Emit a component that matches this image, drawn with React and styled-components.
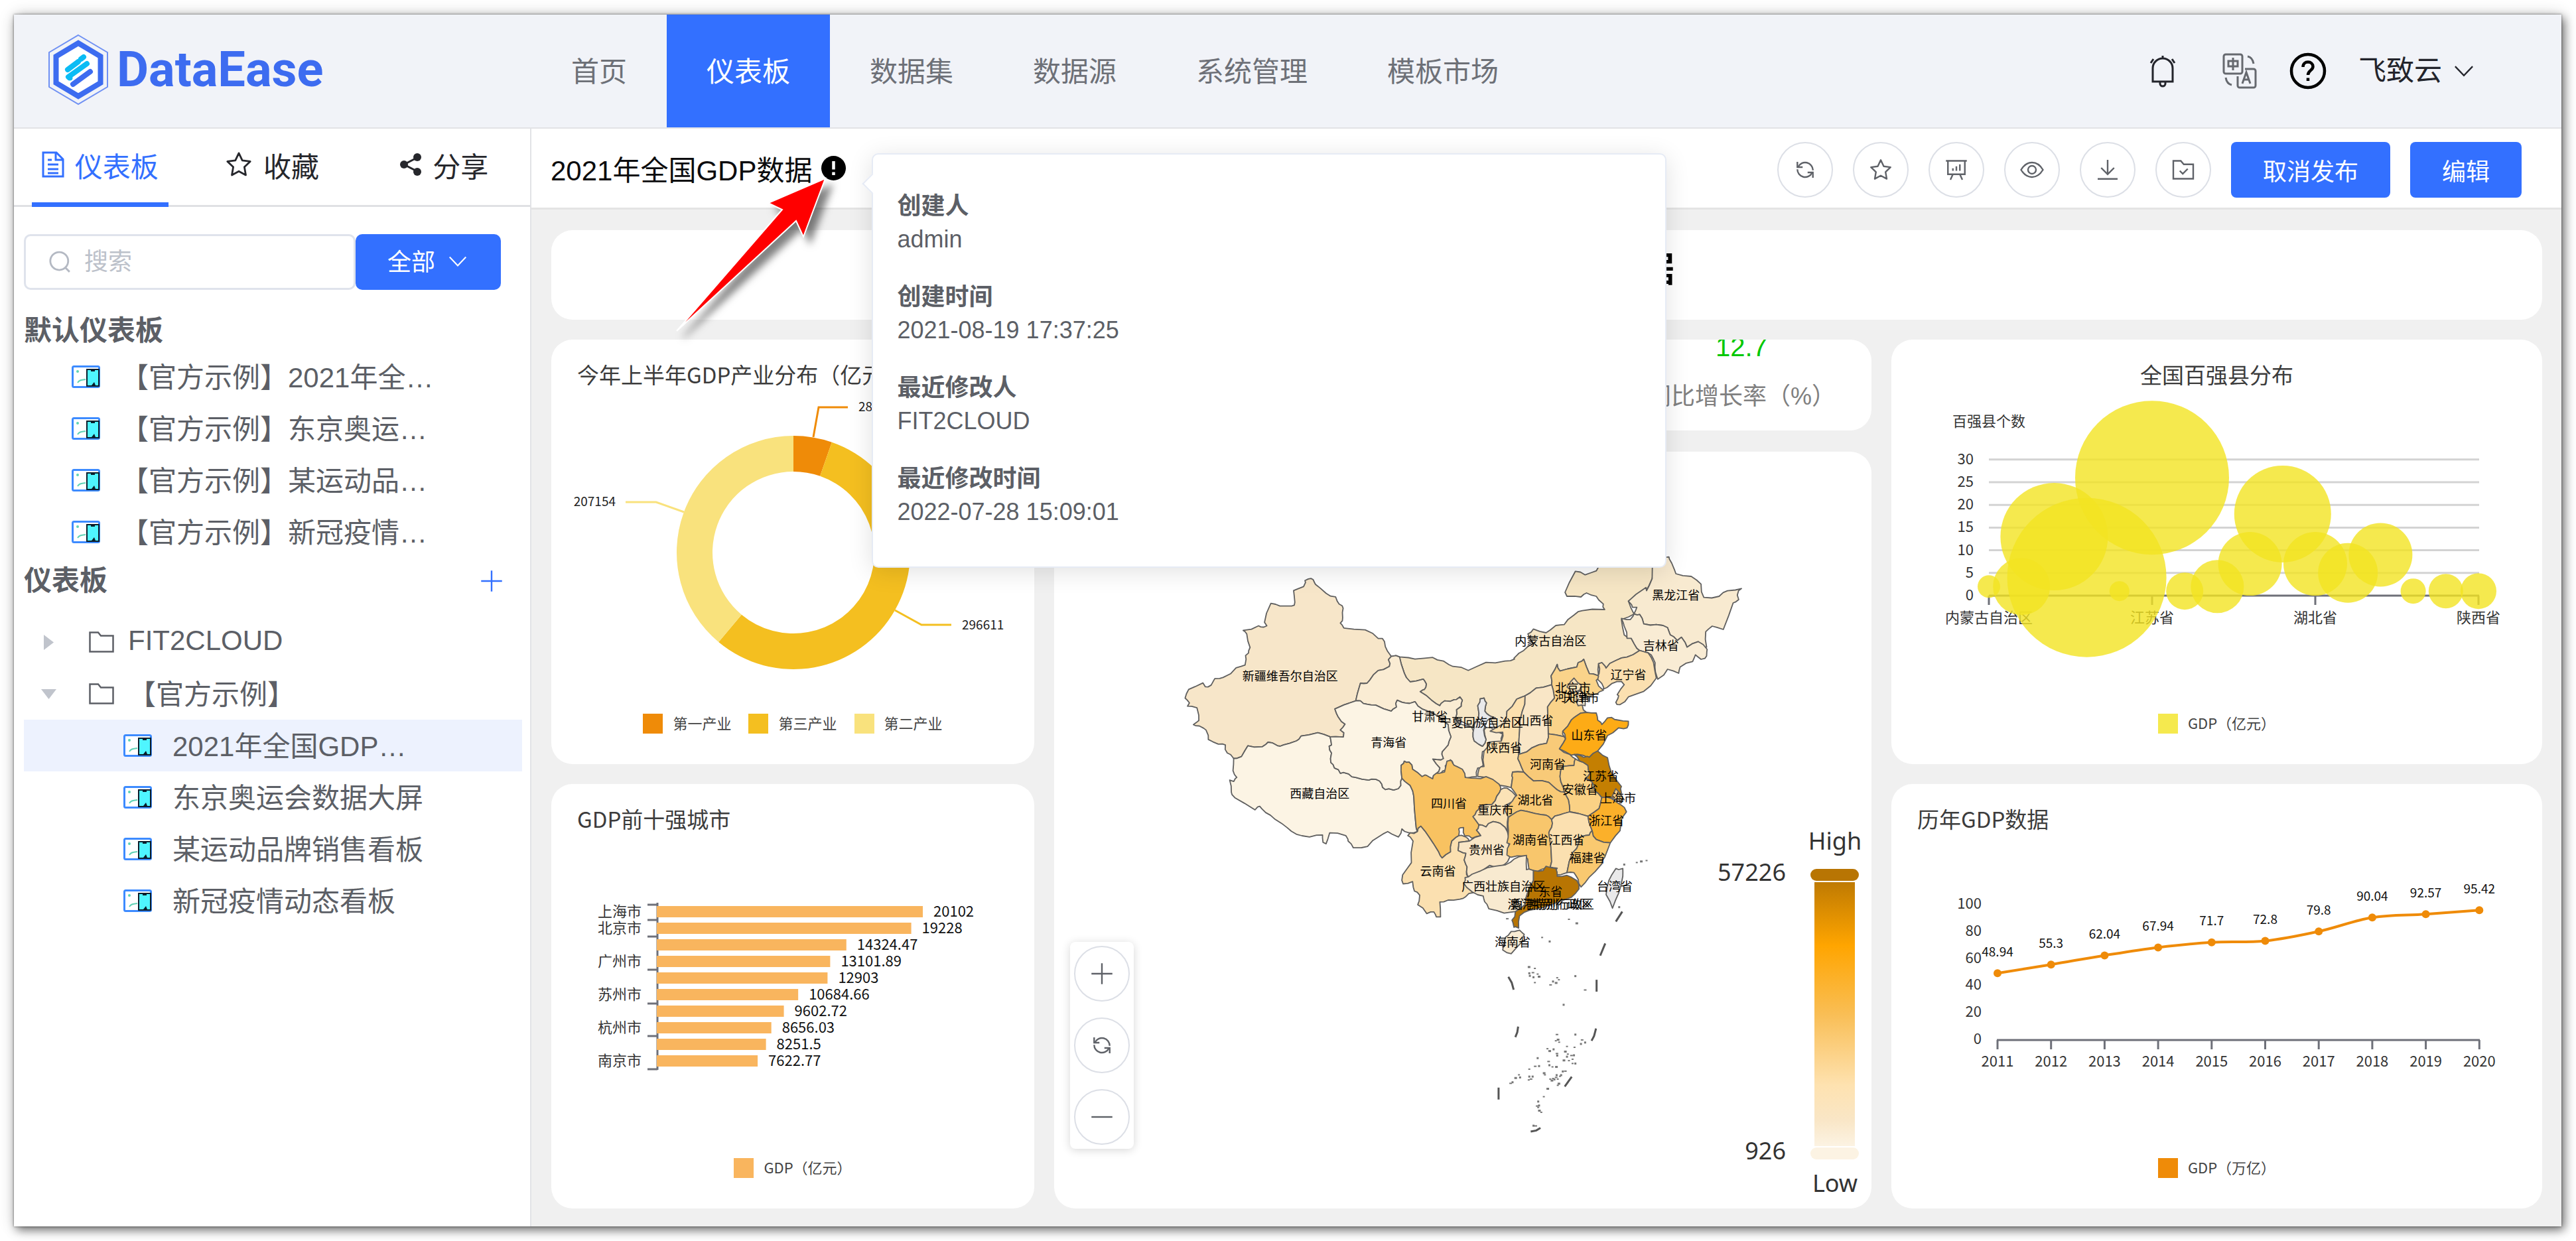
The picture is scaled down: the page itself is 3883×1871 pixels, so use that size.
import React from "react";
import styled, { createGlobalStyle, css } from "styled-components";

const UI_FONT = '"Liberation Sans", "Noto Sans CJK SC", sans-serif';
const CHART_FONT = '"Noto Sans CJK SC", "Noto Sans", sans-serif';
const BLUE = "#3370ff";

const GlobalStyle = createGlobalStyle`
  *, *::before, *::after { box-sizing: border-box; }
  body { margin: 0; background: #fff; font-family: ${UI_FONT}; }
  button, input, select { font-family: inherit; }
  h1, h2, h3, p, ul, dl, dd { margin: 0; padding: 0; }
`;

/* ---------- shell ---------- */

const Page = styled.div`
  display: flex;
  min-height: 100vh;
  padding: 22px 22px 22px 21px;
`;

const Shell = styled.div`
  flex: 1;
  display: flex;
  flex-direction: column;
  min-width: 0;
  background: #fff;
  box-shadow: 0 0 3px rgba(0, 0, 0, 0.5), 4px 5px 14px rgba(0, 0, 0, 0.55), 0 0 24px rgba(0, 0, 0, 0.14);
`;

const Header = styled.header`
  display: flex;
  align-items: stretch;
  height: 172px;
  border-bottom: 2px solid #e2e3e6;
  background: #f1f3f8;
`;

const Brand = styled.a`
  display: flex;
  align-items: center;
  gap: 11px;
  width: 780px;
  padding: 0 0 4px 50px;
  color: #3d6cf0;
  text-decoration: none;
`;

const BrandName = styled.span`
  font: bold 74px/84px Roboto, "Noto Sans", sans-serif;
`;

const Nav = styled.nav`
  display: flex;
  flex: 1;
`;

const NavLink = styled.a`
  display: flex;
  align-items: center;
  padding: 0 60px 6px;
  font-size: 42px;
  text-decoration: none;
  color: ${(p) => (p.$active ? "#fff" : "#6d7077")};
  background: ${(p) => (p.$active ? BLUE : "transparent")};
`;

const HeaderTools = styled.div`
  display: flex;
  align-items: center;
  gap: 48px;
  padding-right: 132px;
`;

const ToolButton = styled.button`
  display: flex;
  align-items: center;
  justify-content: center;
  gap: 18px;
  min-width: ${(p) => p.$width || 0}px;
  padding: 0;
  border: 0;
  background: none;
  color: ${(p) => p.$tone || "#23242b"};
  font-size: 42px;
  line-height: 60px;
`;

const Body = styled.div`
  display: flex;
  flex: 1;
`;

/* ---------- sidebar ---------- */

const Sidebar = styled.aside`
  flex: 0 0 780px;
  min-width: 0;
  border-right: 2px solid #e2e3e6;
`;

const Tabs = styled.div`
  display: grid;
  grid-template-columns: repeat(3, 1fr);
  justify-items: center;
  height: 118px;
  border-bottom: 3px solid #e0e1e4;
`;

const Tab = styled.button`
  display: flex;
  align-items: center;
  gap: 16px;
  height: 118px;
  padding: 0 15px 3px;
  border: 0;
  border-bottom: 7px solid ${(p) => (p.$active ? BLUE : "transparent")};
  background: none;
  color: ${(p) => (p.$active ? BLUE : "#26272c")};
  font-size: 42px;
`;

const SidebarBody = styled.div`
  padding: 41px 12px 0 15px;
`;

const SearchRow = styled.form`
  display: flex;
  padding-right: 32px;
`;

const SearchBox = styled.label`
  display: flex;
  flex: 1;
  align-items: center;
  gap: 20px;
  min-width: 0;
  height: 84px;
  padding: 0 34px;
  border: 3px solid #dfe3ec;
  border-radius: 10px;
  color: #b4b9c3;
`;

const SearchInput = styled.input`
  flex: 1;
  min-width: 0;
  padding: 0;
  border: 0;
  outline: 0;
  background: none;
  font-size: 36px;
  &::placeholder { color: #bcc1ca; opacity: 1; }
`;

const FilterBox = styled.label`
  position: relative;
  color: #fff;
  svg { position: absolute; right: 51px; top: 27px; pointer-events: none; }
`;

const FilterSelect = styled.select`
  appearance: none;
  width: 219px;
  height: 84px;
  padding: 0 0 0 48px;
  border: 0;
  border-radius: 10px;
  background: ${BLUE};
  color: #fff;
  font-size: 36px;
`;

const GroupHead = styled.div`
  display: flex;
  align-items: center;
  justify-content: space-between;
  margin-top: ${(p) => p.$top}px;
  padding-right: 28px;
`;

const GroupTitle = styled.h2`
  font-size: 42px;
  line-height: 60px;
  font-weight: bold;
  color: #5c5f66;
`;

const AddButton = styled.button`
  display: flex;
  padding: 0;
  border: 0;
  background: none;
  color: ${BLUE};
`;

const Tree = styled.ul`
  list-style: none;
  margin-top: ${(p) => p.$top || 0}px;
`;

const TreeRow = styled.li`
  display: flex;
  align-items: center;
  gap: ${(p) => (p.$folder ? 21 : 31)}px;
  height: 78px;
  padding-left: ${(p) => p.$indent}px;
  background: ${(p) => (p.$selected ? "#edf2fe" : "transparent")};
  color: #5c5f66;
  font-size: 42px;
  white-space: nowrap;
`;

const RowText = styled.span`
  padding-bottom: 5px;
`;

const Caret = styled.span`
  display: flex;
  justify-content: center;
  width: 24px;
  margin-right: 28px;
  color: #c0c4cc;
`;

/* ---------- workspace ---------- */

const Workspace = styled.main`
  display: flex;
  flex: 1;
  flex-direction: column;
  min-width: 0;
`;

const Toolbar = styled.div`
  display: flex;
  justify-content: space-between;
  padding: 20px 60px 15px 29px;
  border-bottom: 3px solid #e4e4e4;
`;

const BoardName = styled.div`
  position: relative;
  display: flex;
  align-items: center;
  gap: 14px;
  height: 78px;
  color: #0c0c0e;
  font-size: 42px;
  white-space: nowrap;
`;

const InfoButton = styled.button`
  display: flex;
  padding: 0;
  border: 0;
  background: none;
`;

const Actions = styled.div`
  display: flex;
  gap: 30px;
`;

const roundButton = css`
  display: flex;
  align-items: center;
  justify-content: center;
  width: 84px;
  height: 84px;
  padding: 0;
  border: 2px solid #dcdfe6;
  border-radius: 50%;
  background: #fff;
  color: #5f6268;
`;

const RoundButton = styled.button`
  ${roundButton}
`;

const PrimaryButton = styled.button`
  height: 84px;
  padding: 0 48px;
  border: 0;
  border-radius: 8px;
  background: ${BLUE};
  color: #fff;
  font-size: 36px;
`;

const Popover = styled.dl`
  position: absolute;
  z-index: 3;
  left: calc(100% + 39px);
  top: 17px;
  display: grid;
  gap: 37px;
  width: 1198px;
  padding: 53px 36px 57px;
  border: 2px solid #e6ebf5;
  border-radius: 10px;
  background: #fff;
  box-shadow: 0 6px 36px rgba(0, 0, 0, 0.12);
  color: #5c5f66;
  font-size: 36px;
  line-height: 50px;
  dt { font-weight: bold; }
  &::before {
    content: "";
    position: absolute;
    left: -12px;
    top: 33px;
    width: 22px;
    height: 22px;
    border: solid #e6ebf5;
    border-width: 0 0 2px 2px;
    background: #fff;
    transform: rotate(45deg);
  }
`;

const Pointer = styled.svg`
  position: absolute;
  z-index: 4;
  left: 190px;
  top: 41px;
  overflow: visible;
  filter: drop-shadow(10px 10px 6px rgba(0, 0, 0, 0.5));
`;

const Board = styled.div`
  display: grid;
  flex: 1;
  grid-template-columns: 728fr 1232fr 981fr;
  align-content: start;
  gap: 30px;
  padding: 31px 29px 26px 30px;
  background: #f0f0f0;
`;

const Card = styled.section`
  position: relative;
  overflow: hidden;
  min-width: 0;
  border-radius: 32px;
  background: #fff;
`;

const BannerCard = styled(Card)`
  grid-column: 1 / -1;
  padding: 22px 0 37px;
  text-align: center;
`;

const BannerTitle = styled.h1`
  font-size: 52px;
  line-height: 76px;
  font-weight: bold;
  color: #000;
`;

const Column = styled.div`
  display: flex;
  flex-direction: column;
  gap: ${(p) => p.$gap || 30}px;
  min-width: 0;
`;

const ChartCard = styled(Card)`
  padding: 32px 0 45px;
`;

const ChartTitle = styled.h3`
  padding: 0 39px;
  font: normal 33px/40px ${CHART_FONT};
  text-align: ${(p) => (p.$center ? "center" : "left")};
  white-space: nowrap;
  color: #3c3c3c;
`;

const Chart = styled.svg`
  display: block;
  width: 100%;
  height: auto;
  font-family: ${CHART_FONT};
`;

const Legend = styled.div`
  display: flex;
  justify-content: center;
  gap: 26px;
`;

const LegendItem = styled.span`
  display: flex;
  align-items: center;
  gap: 15px;
  height: 32px;
  font: 22px/28px ${CHART_FONT};
  color: #444;
  &::before {
    content: "";
    width: 30px;
    height: 30px;
    background: ${(p) => p.$color};
  }
`;

const LegendText = styled.span`
  padding-bottom: 4px;
`;

const KpiCard = styled(Card)`
  display: flex;
  align-items: flex-end;
  justify-content: flex-end;
  height: 137px;
  padding: 0 54px 25px 0;
`;

const Kpi = styled.p`
  display: flex;
  flex-direction: column;
  align-items: center;
  font-size: 36px;
  line-height: 52px;
  color: #808080;
  strong {
    font-weight: normal;
    font-size: 40px;
    line-height: 98px;
    color: #00c800;
  }
`;

const MapControls = styled.div`
  position: absolute;
  left: 24px;
  bottom: 90px;
  display: grid;
  gap: 24px;
  padding: 6px;
  border-radius: 8px;
  background: #fff;
  box-shadow: 0 2px 14px rgba(0, 0, 0, 0.16);
`;

/* ---------- icons ---------- */

function Icon({ size = 36, height, box = "0 0 24 24", w = 1.6, children }) {
  return (
    <svg width={size} height={height || size} viewBox={box} fill="none" stroke="currentColor" strokeWidth={w} aria-hidden="true">
      {children}
    </svg>
  );
}

const Chevron = ({ size = 30 }) => (
  <Icon size={size} w={1.8}><path d="M1.5 6.5 12 17.5 22.5 6.5" /></Icon>
);

const RefreshIcon = () => (
  <Icon>
    <path d="M5 9a7.800 7.800 0 0 1 14.800 3.500M4.200 11.500A7.800 7.800 0 0 0 19 15" />
    <path d="M4.200 4v5.300h5.300M19.800 20v-5.300h-5.300" />
  </Icon>
);

const StarIcon = ({ size = 36 }) => (
  <Icon size={size}>
    <path d="m12 2.2 3 6.3 6.8.9-5 4.8 1.2 6.9-6-3.3-6 3.3 1.2-6.9-5-4.8 6.8-.9z" strokeLinejoin="round" />
  </Icon>
);

const BoardIcon = () => (
  <Icon>
    <path d="M1.5 3h21M3.5 3v13.5h17V3M8.5 16.5 6 22M15.5 16.5 18 22M8.5 13v-2.5M12 13V8.5M15.5 13V6.5" />
  </Icon>
);

const EyeIcon = () => (
  <Icon>
    <path d="M1 12c3-5 6.800-7.300 11-7.300S20 7 23 12c-3 5-6.800 7.300-11 7.300S4 17 1 12z" />
    <circle cx="12" cy="12" r="4" />
  </Icon>
);

const DownloadIcon = () => (
  <Icon><path d="M12 2v14M5.500 10l6.500 6.500L18.500 10M2 21.200h20" /></Icon>
);

const FolderCheckIcon = () => (
  <Icon><path d="M2 21V3h7.500l3 3.500H22V21zM8.500 13l3 3 5-5" /></Icon>
);

const PlusIcon = () => <Icon><path d="M12 1.500v21M1.500 12h21" /></Icon>;
const MinusIcon = () => <Icon><path d="M1.500 12h21" /></Icon>;

const LogoIcon = () => (
  <svg width="94" height="108" viewBox="0 0 94 108" aria-hidden="true">
    <path d="M47 2 91 28v52L47 106 3 80V28z" fill="none" stroke="#6f90f3" strokeWidth="2" />
    <path d="M47 14 80.500 34v40L47 94 13.500 74V34z" fill="#fff" stroke="#3d6cf0" strokeWidth="8" />
    <g strokeLinecap="round" strokeWidth="8" fill="none">
      <path d="M51 38 55 35M31 54 47 42M32 65 60 45M34 66.500h.5" stroke="#0bbcf5" />
      <path d="M39 76 65 57" stroke="#3d6cf0" />
    </g>
  </svg>
);

const BellIcon = () => (
  <Icon size={46} height={50} box="0 0 46 50" w={3}>
    <path d="M8 41V21a15 15 0 0 1 30 0v20zM23 6V2M5 13l4-6M41 13l-4-6M19 42v2a4 4 0 0 0 8 0v-2" />
  </Icon>
);

const LanguageIcon = () => (
  <Icon size={54} box="0 0 54 54" w={3}>
    <rect x="3" y="2" width="28" height="29" rx="3" />
    <path d="M35 24h13a3 3 0 0 1 3 3v22a3 3 0 0 1-3 3H27a3 3 0 0 1-3-3V35" />
    <path d="M17 7v19M10 12h14v8H10zM31 46l6-17 6 17M33 40h9M39 5c5 1 8 5 9 11M15 48c-5-1-8-5-9-11" strokeWidth="3" />
  </Icon>
);

const HelpIcon = () => (
  <Icon size={56} box="0 0 56 56" w={4.5}>
    <circle cx="28" cy="28" r="25" stroke="#000" />
    <path d="M20.500 22c0-5 3.500-7.500 7.500-7.500s7.500 2.800 7.500 7c0 5.500-7.500 6-7.500 12.500M28 38.500v4.500" stroke="#000" />
  </Icon>
);

const DocIcon = () => (
  <Icon size={34} height={40} box="0 0 34 40" w={3}>
    <path d="M2 2h20l10 10v26H2zM21 2v11h11M9 20h16M9 27h16M9 13h6M9 33h16" />
  </Icon>
);

const ShareIcon = () => (
  <svg width="34" height="36" viewBox="0 0 34 36" aria-hidden="true">
    <path d="M28 7 7 18l21 11" fill="none" stroke="#26272c" strokeWidth="3" />
    <g fill="#26272c"><circle cx="27" cy="7" r="6" /><circle cx="7" cy="18" r="6" /><circle cx="27" cy="29" r="6" /></g>
  </svg>
);

const SearchIcon = () => (
  <Icon size={34} w={2}><circle cx="11.500" cy="11" r="9.500" /><path d="m18 18 4.500 4.500" /></Icon>
);

const FolderIcon = () => (
  <Icon size={38} height={32} box="0 0 38 32" w={2.5}>
    <path d="M1.500 30.500v-29H14l4 5h18.500v24z" />
  </Icon>
);

const DashboardIcon = () => (
  <svg width="43" height="34" viewBox="0 0 43 34" aria-hidden="true">
    <rect x="1.500" y="1.500" width="40" height="31" rx="2" fill="#fff" stroke="#3d8bff" strokeWidth="3" />
    <circle cx="9" cy="9" r="2" fill="#5fd3b5" />
    <path d="M9 26c3-5 7-4 12-5" fill="none" stroke="#5fd3b5" strokeWidth="2" />
    <rect x="23" y="6" width="18" height="25" fill="#4ff5ff" stroke="#0b1e2c" strokeWidth="2" />
    <path d="M29 7h6v2h-6zM30 30l4-5 2 5z" fill="#0b1e2c" />
  </svg>
);

const InfoIcon = () => (
  <svg width="37" height="37" viewBox="0 0 37 37" aria-hidden="true">
    <circle cx="18.500" cy="18.500" r="18.500" fill="#000" />
    <path d="M18.500 8v12.500M18.500 24.500v4.500" stroke="#fff" strokeWidth="4.500" />
  </svg>
);

/* ---------- charts ---------- */

const AXIS = "#6e7079";
const INK = "#333";

const polar = (cx, cy, r, deg) => {
  const a = ((deg - 90) * Math.PI) / 180;
  return [cx + r * Math.cos(a), cy + r * Math.sin(a)];
};

const ringPath = (cx, cy, r0, r1, from, to) => {
  const big = to - from > 180 ? 1 : 0;
  const [a, b, c, d] = [polar(cx, cy, r1, from), polar(cx, cy, r1, to), polar(cx, cy, r0, to), polar(cx, cy, r0, from)];
  return `M${a}A${r1} ${r1} 0 ${big} 1 ${b}L${c}A${r0} ${r0} 0 ${big} 0 ${d}Z`;
};

const SECTORS = [
  { name: "第一产业", value: 28402, color: "#ef8b08", line: "395,75 403,30 447,30", x: 463, y: 27 },
  { name: "第三产业", value: 296611, color: "#f4bf20", line: "518,336 558,358 603,358", x: 619, y: 356 },
  { name: "第二产业", value: 207154, color: "#f9e27d", line: "200,188 158,173 112,173", x: 97, y: 170, end: true },
];

function DonutChart() {
  const total = SECTORS.reduce((s, d) => s + d.value, 0);
  let angle = 0;
  return (
    <Chart viewBox="0 0 728 491" fontSize="19">
      {SECTORS.map((d) => {
        const from = angle;
        angle += (d.value / total) * 360;
        return (
          <g key={d.name}>
            <path d={ringPath(365, 249, 122, 176, from, angle)} fill={d.color} />
            <polyline points={d.line} fill="none" stroke={d.color} strokeWidth="3" />
            <text x={d.x} y={d.y} fill="#222" dominantBaseline="central" textAnchor={d.end ? "end" : "start"}>{d.value}</text>
          </g>
        );
      })}
    </Chart>
  );
}

const CITIES = [
  ["上海市", 20102], ["北京市", 19228], ["", 14324.47], ["广州市", 13101.89], ["", 12903],
  ["苏州市", 10684.66], ["", 9602.72], ["杭州市", 8656.03], ["", 8251.5], ["南京市", 7622.77],
];

function CityChart() {
  return (
    <Chart viewBox="0 0 728 491" fontSize="22">
      <path d="M160 107V359M145 110h15M145 133h15M145 158h15M145 208h15M145 259h15M145 308h15M145 358h15" fill="none" stroke={AXIS} strokeWidth="3" />
      {CITIES.map(([city, value], i) => {
        const y = 121 + i * 25;
        const w = value * 0.01995;
        return (
          <g key={value}>
            <rect x="159" y={y - 9} width={w} height="17" fill="#f9b55e" />
            <text x="136" y={y - 3} fill={INK} textAnchor="end" dominantBaseline="central">{city}</text>
            <text x={175 + w} y={y - 3} fill="#111" dominantBaseline="central">{value}</text>
          </g>
        );
      })}
    </Chart>
  );
}

const BUBBLES = [
  [2, 17], [2, 43], [13, 81], [4, 120], [1, 15], [26, 116], [1, 28], [2, 40],
  [7, 48], [18, 73], [7, 48], [5, 45], [9, 48], [1, 19], [1, 26], [1, 27],
];
const PROVINCE_TICKS = ["内蒙古自治区", "江苏省", "湖北省", "陕西省"];

function BubbleChart() {
  const py = (v) => 314 - v * 6.84;
  const px = (i) => 147 + i * 49.2;
  return (
    <Chart viewBox="0 0 981 491" fontSize="22">
      <text x="147" y="49" fill={INK} textAnchor="middle" dominantBaseline="central">百强县个数</text>
      {[0, 5, 10, 15, 20, 25, 30].map((v) => (
        <g key={v}>
          <line x1="147" x2="886" y1={py(v)} y2={py(v)} stroke={v ? "#d3d3d3" : AXIS} strokeWidth="3" />
          <text x="124" y={py(v) - 3} fill={INK} textAnchor="end" dominantBaseline="central">{v}</text>
        </g>
      ))}
      {PROVINCE_TICKS.map((name, k) => (
        <g key={name}>
          <line x1={px(k * 5)} x2={px(k * 5)} y1="314" y2="328" stroke={AXIS} strokeWidth="3" />
          <text x={px(k * 5)} y="345" fill={INK} textAnchor="middle" dominantBaseline="central">{name}</text>
        </g>
      ))}
      {BUBBLES.map(([v, r], i) => (
        <circle key={i} cx={px(i)} cy={py(v)} r={r} fill="#f2e422" fillOpacity="0.8" />
      ))}
    </Chart>
  );
}

const YEARS = [48.94, 55.3, 62.04, 67.94, 71.7, 72.8, 79.8, 90.04, 92.57, 95.42];

function YearChart() {
  const py = (v) => 313 - v * 2.04;
  const px = (i) => 160 + i * 80.7;
  const pts = YEARS.map((v, i) => [px(i), py(v)]);
  const slope = (i) => {
    if (i === 0 || i === pts.length - 1) return null;
    return (pts[i + 1][1] - pts[i - 1][1]) / (pts[i + 1][0] - pts[i - 1][0]);
  };
  let d = `M${pts[0]}`;
  for (let i = 1; i < pts.length; i++) {
    const [x0, y0] = pts[i - 1];
    const [x1, y1] = pts[i];
    const flat = (y1 - y0) / (x1 - x0);
    const s0 = slope(i - 1) ?? flat;
    const s1 = slope(i) ?? flat;
    const h = (x1 - x0) * 0.35;
    d += `C${x0 + h} ${y0 + s0 * h} ${x1 - h} ${y1 - s1 * h} ${x1} ${y1}`;
  }
  return (
    <Chart viewBox="0 0 981 491" fontSize="22">
      {[0, 20, 40, 60, 80, 100].map((v) => (
        <text key={v} x="136" y={py(v) - 3} fill={INK} textAnchor="end" dominantBaseline="central">{v}</text>
      ))}
      <line x1="159" x2="887" y1="314" y2="314" stroke={AXIS} strokeWidth="3" />
      <path d={d} fill="none" stroke="#ef8b08" strokeWidth="4" />
      {pts.map(([x, y], i) => (
        <g key={i}>
          <line x1={x} x2={x} y1="314" y2="328" stroke={AXIS} strokeWidth="3" />
          <text x={x} y="344" fill={INK} textAnchor="middle" dominantBaseline="central">{2011 + i}</text>
          <circle cx={x} cy={y} r="6" fill="#ef8b08" />
          <text x={x} y={y - 34} fontSize="19" fill="#111" textAnchor="middle" dominantBaseline="central">{YEARS[i]}</text>
        </g>
      ))}
    </Chart>
  );
}

/* ---------- map ---------- */

const SHEETS = {
  W: { x: 151, y: 138, sx: 2.8, sy: 2.45 },
  E: { x: 611, y: 138, sx: 2.376, sy: 3 },
  S: { x: 611, y: 518, sx: 2.376, sy: 2.337 },
};

const place = (sheet, x, y) => {
  const s = SHEETS[sheet];
  return [s.x + x / s.sx, s.y + y / s.sy];
};

const trace = (src) => {
  let sheet = "W";
  const out = [];
  src.trim().split(/\s+/).forEach((t) => {
    if (SHEETS[t]) sheet = t;
    else out.push(place(sheet, ...t.split(",").map(Number)));
  });
  return out;
};

// Roughens every edge at its middle; the offset depends only on the
// position, so neighbouring regions keep a common border.
const jitter = (x, y) => {
  const n = Math.sin(Math.round(x) * 12.9898 + Math.round(y) * 78.233) * 43758.5453;
  return (n - Math.floor(n) - 0.5) * 3.6;
};

const outline = (src) => {
  const pts = trace(src);
  let d = "";
  pts.forEach(([x, y], i) => {
    const [nx, ny] = pts[(i + 1) % pts.length];
    d += `${i ? "L" : "M"}${x.toFixed(1)} ${y.toFixed(1)}`;
    if (Math.hypot(nx - x, ny - y) > 7) {
      const mx = (x + nx) / 2;
      const my = (y + ny) / 2;
      d += `L${(mx + jitter(mx, my)).toFixed(1)} ${(my + jitter(my, mx)).toFixed(1)}`;
    }
  });
  return `${d}Z`;
};

const REGIONS = [
  ["#f6e6c5", "W 1000,418 1035,420 1100,428 1175,422 1220,435 1260,455 1325,470 1400,440 1480,435 1520,428 E 195,520 230,485 265,455 245,410 265,388 310,405 345,372 375,368 410,325 440,305 520,300 515,275 490,240 455,225 435,243 385,240 378,222 415,127 450,143 490,125 505,100 560,70 700,60 690,160 668,215 605,262 625,320 580,345 590,415 615,430 635,475 645,485 600,515 560,530 525,565 510,540 498,545 498,600 465,590 445,525 425,540 420,560 360,578 350,548 328,600 330,640 275,655 235,690 205,705 170,760 165,810 W 1470,705 1440,690 1412,635 1395,620 1402,590 1392,572 1375,575 1365,600 1368,650 1340,680 1270,650 1275,615 1295,602 1300,580 1290,568 1265,578 1225,582 1205,600 1170,580 1122,548 1140,540 1148,520 1135,502 1080,512 1055,480 1035,420"],
  ["#f7e6c9", "W 130,572 145,540 205,516 215,530 240,524 255,500 290,496 345,460 383,450 385,415 398,405 404,385 390,335 375,322 440,305 462,310 475,305 465,292 492,222 530,232 580,232 593,218 588,175 630,160 636,138 650,132 670,134 680,152 725,185 765,198 780,225 797,240 795,275 785,295 800,313 890,320 945,352 963,352 975,382 1000,418 988,430 992,455 945,470 910,505 898,517 870,517 850,582 762,612 775,640 805,668 785,690 800,700 798,716 742,715 690,700 620,712 600,730 545,745 520,748 480,735 455,752 395,748 368,788 335,795 308,775 300,745 270,742 228,725 218,690 190,675 165,670 188,655 180,608 140,602 148,590"],
  ["#fcf4e4", "W 335,795 368,788 395,748 455,752 480,735 520,748 545,745 600,730 620,712 690,700 742,715 748,745 738,750 748,775 745,810 760,830 785,850 820,852 850,865 905,875 935,872 960,890 975,910 1010,912 1040,895 1045,868 1080,895 1095,935 1103,1030 1110,1065 1075,1070 1045,1055 1030,1085 985,1065 945,1085 900,1120 840,1125 818,1100 808,1080 740,1070 725,1110 712,1105 710,1078 655,1085 600,1075 560,1050 510,1020 470,995 445,972 425,985 340,940 325,920 318,875 335,880 348,865 332,840"],
  ["#faecd3", "W 1000,418 1035,420 1055,480 1080,512 1135,502 1148,520 1140,540 1122,548 1170,580 1205,600 1225,582 1265,578 1290,568 1300,580 1295,602 1275,615 1270,650 1300,670 1340,680 1345,700 1350,730 1385,750 1400,725 1392,690 1400,680 1440,690 1470,705 1465,735 1425,738 1400,765 1385,770 1388,820 1365,830 1360,862 1315,868 1300,840 1262,818 1250,800 1228,822 1230,838 1210,850 1190,850 1205,830 1175,797 1210,800 1220,795 1215,770 1240,745 1252,715 1240,670 1200,640 1130,612 1100,585 1060,590 1025,580 1022,605 1000,620 935,598 900,595 870,582 850,582 870,517 898,517 910,505 945,470 992,455 988,430"],
  ["#fcf4e4", "W 762,612 850,582 870,582 900,595 935,598 1000,620 1022,605 1025,580 1060,590 1100,585 1130,612 1200,640 1240,670 1252,715 1240,745 1215,770 1220,795 1210,800 1175,797 1205,830 1190,850 1175,870 1130,862 1090,835 1075,808 1055,805 1042,820 1045,868 1040,895 1010,912 975,910 960,890 935,872 905,875 850,865 820,852 785,850 760,830 745,810 748,775 738,750 748,745 742,715 798,716 800,700 785,690 805,668 775,640"],
  ["#fce0ae", "E 235,690 225,760 215,850 212,955 215,990 230,1035 190,1035 190,1060 185,1105 145,1095 120,1070 65,1055 70,1020 88,1010 88,940 105,900 150,895 155,855 110,850 165,810 170,760 205,705"],
  ["#e9e9ea", "W 1365,600 1375,575 1392,572 1402,590 1395,620 1412,635 1440,645 1405,655 1390,690 1400,725 1385,750 1350,730 1345,700 1350,670 1368,650"],
  ["#fbe0b0", "W 1110,1065 1125,1045 1160,1085 1200,1140 1215,1162 1250,1140 1255,1100 1285,1080 1315,1085 1330,1100 1285,1105 1282,1135 1315,1145 1308,1170 1320,1195 1318,1225 1350,1240 1335,1255 1350,1290 1315,1305 1290,1315 1240,1318 1205,1325 1208,1380 1190,1380 1180,1362 1150,1368 1112,1335 1120,1300 1098,1285 1090,1250 1050,1258 1048,1225 1085,1180 1092,1100 1070,1080 1080,1070"],
  ["#f8c261", "W 1042,820 1055,805 1075,808 1090,835 1130,862 1150,858 1175,870 1190,850 1225,845 1235,805 1255,803 1265,820 1300,835 1312,865 1360,868 1400,862 1455,890 1462,910 1445,935 1425,965 1375,970 1360,990 1345,1010 1370,1040 1360,1060 1378,1080 1340,1090 1310,1080 1305,1050 1285,1055 1285,1080 1255,1100 1250,1140 1215,1162 1200,1140 1160,1085 1125,1045 1110,1065 1103,1030 1095,935 1080,895 1045,868"],
  ["#fbe2b6", "W 1462,910 1490,905 1528,935 1510,955 1480,968 1500,1000 1490,1030 1490,1065 1460,1035 1430,1028 1400,1048 1370,1040 1345,1010 1360,990 1375,970 1425,965 1445,935"],
  ["#f9e6c6", "W 1378,1080 1360,1060 1370,1040 1400,1048 1430,1028 1460,1035 1490,1065 1497,1110 1500,1160 1480,1185 1450,1200 1415,1190 1380,1215 1345,1225 1322,1230 1320,1195 1308,1170 1315,1145 1282,1135 1285,1105 1330,1100"],
  ["#f8ead0", "E 690,60 750,62 760,90 775,138 830,150 865,185 875,245 930,240 960,215 1010,205 995,235 1000,255 980,270 945,390 905,375 882,400 885,470 865,470 855,445 815,470 795,425 780,440 755,415 745,382 705,368 660,365 645,322 625,320 635,290 620,290 605,262 668,200 670,215 690,160"],
  ["#f9ecd4", "E 580,340 612,345 625,320 645,322 660,365 705,368 745,382 755,415 780,440 795,425 815,470 855,445 887,480 885,510 865,525 845,505 835,535 790,560 785,588 745,570 710,615 700,560 695,525 675,495 645,485 635,475 615,430 600,430 590,375"],
  ["#fbe0b0", "E 645,485 675,495 695,540 705,610 660,670 605,695 575,730 560,720 570,690 565,685 590,640 580,625 545,635 515,660 510,635 490,610 500,590 498,545 510,540 525,565 560,530 600,515"],
  ["#fad38a", "E 328,600 350,548 360,578 420,560 425,540 445,525 465,590 498,600 490,620 515,665 495,680 470,690 450,700 440,735 455,765 420,780 400,800 370,850 375,875 318,862 315,740 340,700 330,640"],
  ["#fae2b8", "E 410,610 435,640 430,665 400,675 385,650"],
  ["#f9e8ca", "E 430,665 450,680 450,735 425,735 420,690"],
  ["#f9e6c6", "E 215,850 225,760 235,690 275,655 330,640 340,700 315,740 318,862 312,905 260,925 212,955"],
  ["#f8ca78", "E 212,955 260,925 312,905 318,862 375,875 380,885 358,930 395,955 415,975 410,1005 370,1010 360,1055 370,1100 375,1125 350,1115 320,1082 265,1075 230,1035 215,990"],
  ["#fdab16", "E 455,765 490,768 495,800 510,820 530,790 545,788 560,798 605,805 600,835 570,835 530,870 495,940 465,968 445,960 400,958 358,930 380,885 370,850 400,800 420,780"],
  ["#fad185", "E 370,1010 410,1005 415,975 430,985 460,1005 468,1040 450,1065 475,1080 485,1120 510,1150 500,1200 460,1235 395,1215 390,1160 375,1125 370,1100 360,1055"],
  ["#c47f02", "E 410,955 445,968 465,968 495,940 530,970 545,1040 580,1100 580,1130 545,1150 510,1150 485,1120 475,1080 450,1065 468,1040 460,1005 430,985"],
  ["#f9ca76", "E 190,1035 230,1035 265,1075 320,1082 350,1115 375,1125 390,1160 395,1215 360,1228 330,1250 310,1230 270,1222 220,1208 205,1215 175,1240 160,1200 190,1165 205,1140 185,1105 190,1060"],
  ["#f8c66c", "E 175,1240 205,1215 220,1208 270,1222 310,1230 330,1250 330,1285 320,1310 330,1440 325,1465 270,1490 250,1490 245,1440 235,1415 185,1420 170,1410 180,1360 170,1355 175,1300"],
  ["#fbe0b0", "E 330,1250 360,1228 395,1215 460,1235 475,1300 465,1320 430,1330 420,1380 405,1400 385,1490 345,1500 350,1470 325,1465 330,1440 320,1310 330,1285"],
  ["#fbb02a", "E 500,1200 510,1150 545,1155 580,1185 598,1215 580,1250 575,1300 540,1355 490,1340 475,1300 460,1235"],
  ["#fad085", "E 560,1110 590,1160 575,1170 545,1150"],
  ["#f9c970", "E 465,1320 475,1300 490,1340 540,1355 520,1420 510,1450 465,1510 435,1555 425,1520 410,1490 385,1490 405,1400 420,1380 430,1330"],
  ["#f8ead0", "S 45,278 100,255 165,245 195,225 240,212 240,262 265,265 265,300 245,340 235,385 200,410 160,415 105,400 90,375 85,355 45,340 15,310 20,290"],
  ["#b87503", "S 265,265 300,265 310,250 345,258 350,285 385,282 420,300 428,330 400,360 330,385 250,405 215,425 212,468 195,465 188,440 200,410 235,385 245,340 265,300"],
  ["#f9ecd4", "S 165,500 185,480 215,475 232,490 225,515 185,558 155,545"],
  ["#e9e9ea", "S 560,258 585,258 585,285 570,345 548,398 525,350 535,300"],
];

const MAP_LABELS = [
  ["新疆维吾尔自治区", "W", 573, 488], ["西藏自治区", "W", 698, 920], ["青海省", "W", 989, 733],
  ["甘肃省", "W", 1163, 637], ["宁夏回族自治区", "W", 1380, 660], ["四川省", "W", 1243, 958],
  ["重庆市", "W", 1440, 983], ["云南省", "W", 1197, 1208], ["贵州省", "W", 1403, 1130],
  ["陕西省", "E", 160, 922], ["内蒙古自治区", "E", 326, 437], ["黑龙江省", "E", 775, 232],
  ["吉林省", "E", 722, 460], ["辽宁省", "E", 605, 590], ["北京市", "E", 406, 650],
  ["河北省", "E", 405, 690], ["天津市", "E", 436, 697], ["山西省", "E", 272, 797],
  ["山东省", "E", 464, 863], ["河南省", "E", 316, 995], ["江苏省", "E", 506, 1050],
  ["安徽省", "E", 432, 1110], ["上海市", "E", 568, 1150], ["湖北省", "E", 272, 1157],
  ["浙江省", "E", 526, 1252], ["湖南省", "E", 254, 1337], ["江西省", "E", 384, 1337],
  ["福建省", "E", 458, 1420], ["广西壮族自治区", "S", 157, 318], ["广东省", "S", 305, 337],
  ["澳门特别行政区", "S", 322, 382], ["香港特别行政区", "S", 332, 382], ["台湾省", "S", 556, 318],
  ["海南省", "S", 190, 513],
];

const SEA_DASHES = [
  "583,410 560,445", "522,522 504,565", "491,650 491,692", "489,822 482,848 473,865", "402,992 377,1026",
  "290,1172 275,1181 255,1185", "140,1030 140,1072", "210,815 207,835 200,852", "175,640 187,660 194,685",
];

const ISLETS = `248,604 270,610 252,635 262,625 265,640 280,630 284,638 270,660 250,626 325,668 335,655 350,643 345,660 356,650
  415,636 449,686 373,737 392,437 419,450 296,501 323,514 170,435 572,393 635,237 650,232 670,230 590,243
  348,843 415,842 345,865 352,860 357,870 435,875 438,862 450,870 412,888 322,900 315,893 337,894 348,910 350,916 385,885
  378,902 388,912 385,920 400,917 410,915 392,935 373,933 405,945 415,944 318,938 322,950 333,957 346,956 405,930
  280,925 270,955 285,953 250,965 302,978 306,985 250,990 255,1000 262,990 248,1003 200,995 213,985 217,993 182,1015 190,1010
  325,1000 330,1004 335,998 340,1000 345,994 348,985 352,1000 355,1015 352,1022 370,972 378,972 364,985 360,990 315,1033 302,1062
  282,1078 277,1095 285,1092 282,1100 285,1110 293,1117 265,1163 272,1165`;

function ChinaMap() {
  return (
    <Chart viewBox="0 0 1232 1141">
      <defs>
        <linearGradient id="heat" x1="0" y1="0" x2="0" y2="1">
          <stop offset="0" stopColor="#bf7a02" />
          <stop offset="0.24" stopColor="#ffa500" />
          <stop offset="0.5" stopColor="#f9be55" />
          <stop offset="0.77" stopColor="#fee2b0" />
          <stop offset="0.9" stopColor="#f9e6c6" />
          <stop offset="1" stopColor="#fcf3e3" />
        </linearGradient>
      </defs>
      <g stroke="#5f5f5f" strokeWidth="1.8" strokeLinejoin="round">
        {REGIONS.map(([fill, src]) => <path key={src} d={outline(src)} fill={fill} />)}
      </g>
      <g fill="none" stroke="#555" strokeWidth="3">
        {SEA_DASHES.map((s) => <polyline key={s} points={trace(`S ${s}`).join(" ")} />)}
      </g>
      <g fill="#777">
        {trace(`S ${ISLETS}`).map(([x, y], i) => <rect key={i} x={x - 1.5} y={y - 1} width={i % 3 ? 3 : 4} height={i % 2 ? 2 : 3} />)}
      </g>
      <g fontSize="18" fill="#000" textAnchor="middle">
        {MAP_LABELS.map(([name, sheet, x, y]) => {
          const [cx, cy] = place(sheet, x, y);
          return <text key={name} x={cx} y={cy} dominantBaseline="central">{name}</text>;
        })}
      </g>
      <rect x="1146" y="649" width="61" height="398" fill="url(#heat)" />
      <rect x="1140" y="629" width="73" height="18" rx="9" fill="#b87503" />
      <rect x="1140" y="1049" width="73" height="18" rx="9" fill="#fcf3e3" />
      <g fontSize="36" fill={INK} fontFamily='"Noto Sans", sans-serif'>
        <text x="1177" y="600" textAnchor="middle">High</text>
        <text x="1177" y="1116" textAnchor="middle">Low</text>
        <text x="1103" y="647" textAnchor="end">57226</text>
        <text x="1103" y="1067" textAnchor="end">926</text>
      </g>
    </Chart>
  );
}

/* ---------- page ---------- */

const NAV = ["首页", "仪表板", "数据集", "数据源", "系统管理", "模板市场"];
const DEFAULT_BOARDS = ["【官方示例】2021年全…", "【官方示例】东京奥运…", "【官方示例】某运动品…", "【官方示例】新冠疫情…"];
const BOARDS = ["2021年全国GDP…", "东京奥运会数据大屏", "某运动品牌销售看板", "新冠疫情动态看板"];
const DETAILS = [
  ["创建人", "admin"], ["创建时间", "2021-08-19 17:37:25"],
  ["最近修改人", "FIT2CLOUD"], ["最近修改时间", "2022-07-28 15:09:01"],
];
const ACTIONS = [
  ["刷新", RefreshIcon], ["收藏", StarIcon], ["演示", BoardIcon],
  ["预览", EyeIcon], ["导出", DownloadIcon], ["另存", FolderCheckIcon],
];

function TopBar() {
  return (
    <Header>
      <Brand href="#home"><LogoIcon /><BrandName>DataEase</BrandName></Brand>
      <Nav>
        {NAV.map((n, i) => <NavLink key={n} href={`#nav-${i}`} $active={i === 1}>{n}</NavLink>)}
      </Nav>
      <HeaderTools>
        <ToolButton $width={82} aria-label="消息"><BellIcon /></ToolButton>
        <ToolButton $tone="#66696f" aria-label="语言"><LanguageIcon /></ToolButton>
        <ToolButton aria-label="帮助"><HelpIcon /></ToolButton>
        <ToolButton>飞致云<Chevron /></ToolButton>
      </HeaderTools>
    </Header>
  );
}

function SidePanel() {
  return (
    <Sidebar>
      <Tabs>
        <Tab $active><DocIcon />仪表板</Tab>
        <Tab><StarIcon size={42} />收藏</Tab>
        <Tab><ShareIcon />分享</Tab>
      </Tabs>
      <SidebarBody>
        <SearchRow>
          <SearchBox><SearchIcon /><SearchInput placeholder="搜索" aria-label="搜索" /></SearchBox>
          <FilterBox>
            <FilterSelect aria-label="范围" defaultValue="all"><option value="all">全部</option></FilterSelect>
            <Chevron size={28} />
          </FilterBox>
        </SearchRow>
        <GroupHead $top={32}><GroupTitle>默认仪表板</GroupTitle></GroupHead>
        <Tree>
          {DEFAULT_BOARDS.map((b) => (
            <TreeRow key={b} $indent={72}><DashboardIcon /><RowText>{b}</RowText></TreeRow>
          ))}
        </Tree>
        <GroupHead $top={5}>
          <GroupTitle>仪表板</GroupTitle>
          <AddButton aria-label="新建"><PlusIcon /></AddButton>
        </GroupHead>
        <Tree $top={23}>
          <TreeRow $folder $indent={25}>
            <Caret><svg width="15" height="23" viewBox="0 0 15 23"><path d="M0 0 15 11.500 0 23z" fill="currentColor" /></svg></Caret>
            <FolderIcon /><RowText>FIT2CLOUD</RowText>
          </TreeRow>
          <TreeRow $folder $indent={25}>
            <Caret><svg width="23" height="15" viewBox="0 0 23 15"><path d="M0 0h23L11.500 15z" fill="currentColor" /></svg></Caret>
            <FolderIcon /><RowText>【官方示例】</RowText>
          </TreeRow>
          {BOARDS.map((b, i) => (
            <TreeRow key={b} $indent={150} $selected={i === 0}><DashboardIcon /><RowText>{b}</RowText></TreeRow>
          ))}
        </Tree>
      </SidebarBody>
    </Sidebar>
  );
}

function BoardToolbar() {
  return (
    <Toolbar>
      <BoardName>
        2021年全国GDP数据
        <InfoButton aria-label="详情"><InfoIcon /></InfoButton>
        <Popover>
          {DETAILS.map(([k, v]) => <div key={k}><dt>{k}</dt><dd>{v}</dd></div>)}
        </Popover>
        <Pointer width="224" height="244" viewBox="0 0 224 244" aria-hidden="true">
          <path d="M224 14 138 51l21 10L0 244 180 78l11 24z" fill="#f00" stroke="#fff" strokeWidth="2" />
        </Pointer>
      </BoardName>
      <Actions>
        {ACTIONS.map(([name, Glyph]) => <RoundButton key={name} aria-label={name}><Glyph /></RoundButton>)}
        <PrimaryButton>取消发布</PrimaryButton>
        <PrimaryButton>编辑</PrimaryButton>
      </Actions>
    </Toolbar>
  );
}

function Key({ color, children }) {
  return <LegendItem $color={color}><LegendText>{children}</LegendText></LegendItem>;
}

export default function App() {
  return (
    <Page>
      <GlobalStyle />
      <Shell>
        <TopBar />
        <Body>
          <SidePanel />
          <Workspace>
            <BoardToolbar />
            <Board>
              <BannerCard><BannerTitle>2021年GDP数据</BannerTitle></BannerCard>
              <Column>
                <ChartCard>
                  <ChartTitle>今年上半年GDP产业分布（亿元）</ChartTitle>
                  <DonutChart />
                  <Legend>{SECTORS.map((s) => <Key key={s.name} color={s.color}>{s.name}</Key>)}</Legend>
                </ChartCard>
                <ChartCard>
                  <ChartTitle>GDP前十强城市</ChartTitle>
                  <CityChart />
                  <Legend><Key color="#f9b55e">GDP（亿元）</Key></Legend>
                </ChartCard>
              </Column>
              <Column $gap={32}>
                <KpiCard><Kpi><strong>12.7</strong>同比增长率（%）</Kpi></KpiCard>
                <Card>
                  <ChinaMap />
                  <MapControls>
                    <RoundButton aria-label="放大"><PlusIcon /></RoundButton>
                    <RoundButton aria-label="重置"><RefreshIcon /></RoundButton>
                    <RoundButton aria-label="缩小"><MinusIcon /></RoundButton>
                  </MapControls>
                </Card>
              </Column>
              <Column>
                <ChartCard>
                  <ChartTitle $center>全国百强县分布</ChartTitle>
                  <BubbleChart />
                  <Legend><Key color="#f5e94e">GDP（亿元）</Key></Legend>
                </ChartCard>
                <ChartCard>
                  <ChartTitle>历年GDP数据</ChartTitle>
                  <YearChart />
                  <Legend><Key color="#ef8b08">GDP（万亿）</Key></Legend>
                </ChartCard>
              </Column>
            </Board>
          </Workspace>
        </Body>
      </Shell>
    </Page>
  );
}
